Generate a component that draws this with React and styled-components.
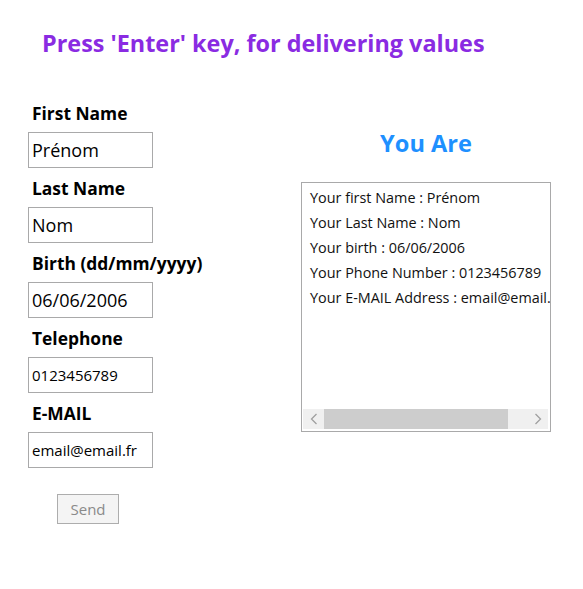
import React from 'react';
import styled, { createGlobalStyle } from 'styled-components';

const GlobalStyle = createGlobalStyle`
    body {
        margin: 8px;
        background: #fff;
        font-family: "Open Sans", "Noto Sans", sans-serif;
        color: #000;
    }
`;

const Page = styled.main`
    padding: 19px 0 0 20px;
`;

const Title = styled.h2`
    margin: 0 0 42px 14px;
    font-size: 23.4px;
    line-height: 32px;
    font-weight: 700;
    color: #8a2be2;
`;

const Row = styled.section`
    display: grid;
    grid-template-columns: 125px 250px;
    column-gap: 148px;
    align-items: start;
`;

const Form = styled.form`
    display: flex;
    flex-direction: column;
`;

const Field = styled.div`
    display: flex;
    flex-direction: column;
    margin-bottom: 8px;
`;

const Label = styled.label`
    font-size: 17.4px;
    line-height: 24px;
    font-weight: 700;
    margin: 0 0 7px 4px;
    white-space: nowrap;
`;

const Input = styled.input`
    box-sizing: border-box;
    width: 125px;
    height: 36px;
    margin: 0;
    padding: 0 3px;
    border: 1px solid #a9a9aa;
    border-radius: 0;
    font-family: inherit;
    font-size: ${(p) => p.$size}px;
    color: #000;
    outline: none;
`;

const SendButton = styled.button`
    box-sizing: border-box;
    width: 62px;
    height: 30px;
    margin: 18px 0 0 29px;
    padding: 0;
    border: 1px solid #adadad;
    border-radius: 0;
    background: #f4f4f4;
    color: #8a8a8a;
    font-family: inherit;
    font-size: 15px;
`;

const Result = styled.div`
    display: flex;
    flex-direction: column;
    align-items: center;
`;

const ResultTitle = styled.h2`
    margin: 26px 0 23px;
    font-size: 23.6px;
    line-height: 32px;
    font-weight: 700;
    color: #1e90ff;
`;

const Box = styled.div`
    box-sizing: border-box;
    width: 250px;
    height: 250px;
    border: 1px solid #a9a9aa;
    display: flex;
    flex-direction: column;
    background: #fff;
`;

const Content = styled.div`
    flex: 1;
    overflow: hidden;
    padding: 2px 0 0 8px;
    white-space: nowrap;
`;

const Line = styled.p`
    margin: 0;
    font-size: 14.4px;
    line-height: 25px;
    color: #111;
`;

const ScrollBar = styled.div`
    display: flex;
    height: 20px;
    margin: 0 2px 2px 1px;
    background: #f0f0f0;
`;

const Arrow = styled.div`
    width: 21px;
    display: flex;
    align-items: center;
    justify-content: center;
`;

const Track = styled.div`
    flex: 1;
    display: flex;
`;

const Thumb = styled.div`
    width: 184px;
    background: #cdcdcd;
`;

const Chevron = ({ dir }) => (
    <svg width="8" height="12" viewBox="0 0 8 12">
        <polyline
            points={dir === 'left' ? '6.5,1 1.5,6 6.5,11' : '1.5,1 6.5,6 1.5,11'}
            fill="none"
            stroke="#a0a0a0"
            strokeWidth="1.3"
        />
    </svg>
);

const fields = [
    { label: 'First Name', value: 'Prénom', size: 18 },
    { label: 'Last Name', value: 'Nom', size: 18 },
    { label: 'Birth (dd/mm/yyyy)', value: '06/06/2006', size: 18 },
    { label: 'Telephone', value: '0123456789', size: 15 },
    { label: 'E-MAIL', value: 'email@email.fr', size: 15 },
];

const lines = [
    'Your first Name : Prénom',
    'Your Last Name : Nom',
    'Your birth : 06/06/2006',
    'Your Phone Number : 0123456789',
    'Your E-MAIL Address : email@email.fr',
];

const App = () => {
    return (
        <Page>
            <GlobalStyle />
            <Title>Press 'Enter' key, for delivering values</Title>
            <Row>
                <Form onSubmit={(e) => e.preventDefault()}>
                    {fields.map((f) => (
                        <Field key={f.label}>
                            <Label>{f.label}</Label>
                            <Input defaultValue={f.value} $size={f.size} />
                        </Field>
                    ))}
                    <SendButton type="button" disabled>Send</SendButton>
                </Form>
                <Result>
                    <ResultTitle>You Are</ResultTitle>
                    <Box>
                        <Content>
                            {lines.map((l) => <Line key={l}>{l}</Line>)}
                        </Content>
                        <ScrollBar>
                            <Arrow><Chevron dir="left" /></Arrow>
                            <Track>
                                <Thumb />
                            </Track>
                            <Arrow><Chevron dir="right" /></Arrow>
                        </ScrollBar>
                    </Box>
                </Result>
            </Row>
        </Page>
    );
};

export default App;
